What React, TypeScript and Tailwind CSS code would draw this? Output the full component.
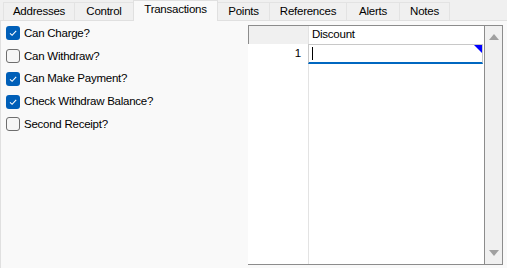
import { useState } from "react";

const tabs = ["Addresses", "Control", "Transactions", "Points", "References", "Alerts", "Notes"];
const tabWidths = [72, 60, 85, 53, 78, 54, 51];

const options = [
  { label: "Can Charge?", checked: true },
  { label: "Can Withdraw?", checked: false },
  { label: "Can Make Payment?", checked: true },
  { label: "Check Withdraw Balance?", checked: true },
  { label: "Second Receipt?", checked: false },
];

function Check({ on }: { on: boolean }) {
  if (on) {
    return (
      <span className="w-[14px] h-[14px] rounded-[3px] bg-[#005fb8] flex items-center justify-center shrink-0">
        <svg width="10" height="10" viewBox="0 0 10 10">
          <path d="M2 5.3 L4.1 7.3 L8.2 2.8" fill="none" stroke="white" strokeWidth="1.1" />
        </svg>
      </span>
    );
  }
  return <span className="w-[14px] h-[14px] rounded-[3px] border border-[#6e6e6e] bg-[#f6f6f6] shrink-0" />;
}

export default function App() {
  const [active, setActive] = useState(2);
  const [opts, setOpts] = useState(options);

  return (
    <div
      className="w-[507px] h-[268px] bg-[#f0f0f0] flex flex-col overflow-hidden text-[11.5px] tracking-[-0.25px] text-black"
      style={{ fontFamily: '"Segoe UI", "Liberation Sans", sans-serif' }}
    >
      {/* tab strip */}
      <div className="flex h-[20px] pl-[3px] items-end">
        {tabs.map((t, i) =>
          i === active ? (
            <div
              key={t}
              style={{ width: tabWidths[i] }}
              className="h-[21px] -mb-px -ml-px z-10 bg-[#f9f9f9] border border-b-0 border-[#e0e0e0] flex items-center justify-center leading-none pb-[3px]"
            >
              {t}
            </div>
          ) : (
            <button
              key={t}
              onClick={() => setActive(i)}
              style={{ width: tabWidths[i] }}
              className="h-[18px] bg-[#f0f0f0] border border-b-0 border-[#e3e3e3] -ml-px first:ml-0 flex items-center justify-center leading-none pt-[1px]"
            >
              {t}
            </button>
          )
        )}
      </div>

      {/* panel */}
      <div className="flex-1 bg-[#f9f9f9] border-t border-l border-[#e0e0e0] flex">
        <div className="w-[247px] pt-[1px] pl-[5px] flex flex-col">
          {opts.map((o, i) => (
            <label
              key={o.label}
              className="h-[22.75px] flex items-center gap-[4px] cursor-default"
              onClick={() => setOpts(opts.map((x, j) => (j === i ? { ...x, checked: !x.checked } : x)))}
            >
              <Check on={o.checked} />
              <span>{o.label}</span>
            </label>
          ))}
        </div>

        {/* grid */}
        <div className="mt-[4px] mb-[3px] w-[255px] flex border-t border-b border-r border-[#8c8c8c]">
          <div className="flex-1 flex flex-col bg-white">
            <div className="h-[18px] flex">
              <div className="w-[60px] bg-[#f0f0f0] border-l border-[#8c8c8c]" />
              <div className="flex-1 border-l border-[#e3e3e3] pl-[3px] flex items-center">Discount</div>
            </div>
            <div className="flex-1 flex">
              <div className="w-[60px] flex flex-col items-end pr-[7px]">
                <div className="h-[20px] flex items-center">1</div>
              </div>
              <div className="flex-1 border-l border-[#e3e3e3] flex flex-col">
                <div className="relative h-[20px] -ml-px mr-[1px] border border-[#c8c8c8] border-b-[2px] border-b-[#0067c0] bg-white flex items-center pl-[3px]">
                  <span className="w-px h-[13px] bg-black" />
                  <span className="absolute top-0 right-0 w-0 h-0 border-t-[8px] border-l-[8px] border-t-[#0000ff] border-l-transparent" />
                </div>
              </div>
            </div>
          </div>
          <div className="w-[18px] bg-[#f0f0f0] border-l border-[#8c8c8c] flex flex-col items-center justify-between py-[8px]">
            <svg width="10" height="6" viewBox="0 0 10 6">
              <path d="M5 0 L10 6 L0 6 Z" fill="#a0a0a0" />
            </svg>
            <svg width="10" height="6" viewBox="0 0 10 6">
              <path d="M0 0 L10 0 L5 6 Z" fill="#a0a0a0" />
            </svg>
          </div>
        </div>
      </div>
    </div>
  );
}
